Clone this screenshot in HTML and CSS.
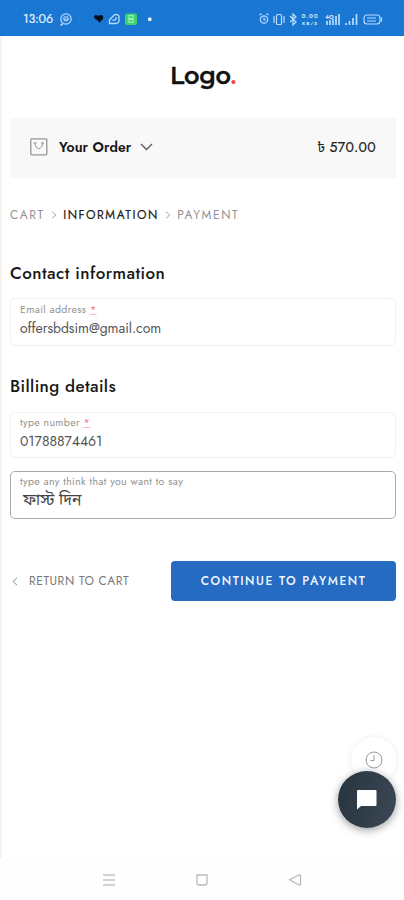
FILE: index.html
```html
<!DOCTYPE html>
<html lang="en">
<head>
<meta charset="utf-8">
<meta name="viewport" content="width=device-width, initial-scale=1">
<title>Checkout</title>
<link rel="stylesheet" href="styles.css">
</head>
<body>
<div class="screen">
  <header class="status">
    <span class="time">13:06</span>
    <svg class="status-left" width="96" height="16" viewBox="0 0 96 16" fill="none">
      <g stroke="#b9dcff" stroke-width="1.2"><circle cx="7" cy="8" r="5.2"/><path d="M2.5 12.5 2 14l2-.7M4.5 6.500q2.500-1.500 5 0M4.500 8q2.500 4 5 0z"/></g>
      <path d="M20 4v8q5 0 6-4" stroke="#1686e4"/>
      <path d="M35 5q2-2 4 0 3-2 5 0 1 3-2 5l-2 2q0-2-2-3-3-1-3-4z" fill="#07111d"/>
      <path d="M50.500 12.500V9l4.500-5q4-1.500 5 1.500v5q-1 2-3 2zM53.500 9q4 1 3.500-3" stroke="#b9dcff" stroke-width="1.300"/>
      <rect x="66" y="2.500" width="12" height="11.500" rx="2" fill="#3bd36f"/>
      <path d="M70 4.500h4v3h-4zM70 8.500h4v3h-4z" stroke="#9bf0b5" stroke-width="1.200"/>
      <rect x="89" y="6.500" width="3.500" height="3.500" rx="1" fill="#e7f5ff"/>
    </svg>
    <svg class="status-right" width="126" height="16" viewBox="0 0 126 16" fill="none" stroke="#b9dcff" stroke-width="1.200">
      <circle cx="6" cy="8.500" r="3.700"/><path d="M6 6.500v2.500h2M1.500 4l2-1.500M10.500 4l-2-1.500"/>
      <rect x="18.500" y="3.500" width="5" height="10" rx="1"/><path d="M16 5v7M26 5v7"/>
      <path d="m32 5 6 6-3 3V3l3 3-6 5"/>
      <g fill="#d6ebff" stroke="none" class="tiny"><text x="43.500" y="7" textLength="16">0.00</text><text class="unit" x="44" y="14" textLength="15">KB/S</text><text x="67" y="8">4G</text></g>
      <path d="M69 14v-4M72 14V9M75 14V8M78 14V5M81 14V3M88 14v-2M91.500 14v-4M95 14V7M98.500 14V3" stroke-width="1.700"/>
      <rect x="106" y="4" width="16" height="9" rx="3"/><path d="M123.500 6.500v4M109 7h9M109 10h9"/>
    </svg>
  </header>

  <main>
    <div class="logo">Logo<span>.</span></div>

    <section class="order">
      <svg width="18" height="18" viewBox="0 0 18 18" fill="none" stroke="#969696" stroke-width="1.300"><rect x=".8" y=".8" width="16" height="16" rx=".8"/><path d="M5 4.500q.2 6 3.800 6t3.900-6M3.500 5h3M11 5h3" stroke-width="1"/></svg>
      <strong>Your Order</strong>
      <svg class="chev" width="13" height="8" viewBox="0 0 13 8" fill="none" stroke="#555" stroke-width="1.300"><path d="m1 1 5.500 5.500L12 1"/></svg>
      <span class="price">৳ <b>570.00</b></span>
    </section>

    <nav class="crumbs">
      <span class="c1">CART</span>
      <svg width="6" height="8" viewBox="0 0 6 8" fill="none" stroke="#aaa"><path d="m1 .8 4 3.200-4 3.200"/></svg>
      <span class="c2">INFORMATION</span>
      <svg width="6" height="8" viewBox="0 0 6 8" fill="none" stroke="#aaa"><path d="m1 .8 4 3.200-4 3.200"/></svg>
      <span class="c3">PAYMENT</span>
    </nav>

    <h2 class="h-contact">Contact information</h2>
    <div class="field email">
      <label>Email address <em>*</em></label>
      <div class="value">offersbdsim@gmail.com</div>
    </div>

    <h2 class="h-billing">Billing details</h2>
    <div class="field number">
      <label>type number <em>*</em></label>
      <div class="value">01788874461</div>
    </div>
    <div class="field note">
      <label>type any think that you want to say</label>
      <div class="value bn" lang="bn">ফাস্ট দিন</div>
    </div>

    <div class="actions">
      <a class="back"><svg width="6" height="9" viewBox="0 0 6 9" fill="none" stroke="#888"><path d="M5 .8 1 4.500l4 3.700"/></svg><span>RETURN TO CART</span></a>
      <button><span>CONTINUE TO PAYMENT</span></button>
    </div>
  </main>

  <div class="recent">
    <svg width="18" height="18" viewBox="0 0 18 18" fill="none" stroke="#999"><circle cx="9" cy="9" r="8"/><path d="M9 4v5.500H5.500"/></svg>
  </div>
  <div class="chat">
    <svg width="22" height="22" viewBox="0 0 22 22"><path d="M2 1h17.500q1 0 1 1v14q0 1-1 1H5l-4 3.500V2q0-1 1-1z" fill="#fff"/></svg>
  </div>

  <footer class="system">
    <svg width="14" height="14" viewBox="0 0 14 14" fill="none" stroke="#c4c4c4" stroke-width="1.300"><path d="M1 2h12M1 7h12M1 12h12"/></svg>
    <svg width="14" height="14" viewBox="0 0 14 14" fill="none" stroke="#bbb" stroke-width="1.300"><path d="M2 2h10v8q0 2-2 2H4q-2 0-2-2z"/></svg>
    <svg width="14" height="14" viewBox="0 0 14 14" fill="none" stroke="#bbb" stroke-width="1.300"><path d="M1.500 6.800 11 2q1.500-.3 1.500 1v8q0 1.500-1.500 1z"/></svg>
  </footer>
</div>
</body>
</html>
```
FILE: styles.css
```css
* { box-sizing: border-box; }
body { margin: 0; background: #fff; font-family: Jost, Lato, "Noto Sans Bengali", sans-serif; color: #222; }
.screen { position: relative; height: 900px; overflow: hidden; display: flex; flex-direction: column; }
.status { height: 36px; flex: none; background: #1976d2; display: flex; align-items: center; padding: 1px 20px 0 23px; color: #e2f1ff; }
.time { width: 36px; font-size: 12.500px; letter-spacing: -.2px; white-space: nowrap; -webkit-text-stroke: .2px #e2f1ff; }
.status-right { margin-left: auto; }
.tiny { font-size: 6px; font-weight: 600; }
.tiny .unit { font-size: 5px; }
main { flex: 1; padding: 0 8px 0 8px; border-left: 2px solid #f3f3f3; white-space: nowrap; }
.logo { height: 82px; padding-top: 25px; text-align: center; font-family: Montserrat, Jost, sans-serif; font-size: 24px; line-height: 30px; font-weight: 600; color: #111; letter-spacing: -.3px; -webkit-text-stroke: .3px #111; }
.logo span { color: #f5484c; -webkit-text-stroke: 0; }
.order { height: 60px; background: #f8f8f8; display: flex; align-items: center; padding: 0 20px 2px; }
.order strong { margin-left: 11px; font-size: 14px; font-weight: 600; color: #151515; letter-spacing: .1px; }
.chev { margin-left: 9px; }
.price { margin-left: auto; font-size: 14px; }
.price b { font-weight: 400; letter-spacing: .3px; -webkit-text-stroke: .2px #222; }
.crumbs { height: 74px; display: flex; align-items: center; font-size: 12px; color: #929292; }
.crumbs svg { margin: 0 6px 0 6.500px; }
.c1, .c3 { letter-spacing: 1.600px; }
.c2 { color: #222; letter-spacing: 1.550px; -webkit-text-stroke: .2px #222; }
h2 { margin: 0; font-size: 17px; line-height: 26px; font-weight: 500; color: #171717; }
.h-contact { height: 46px; padding-top: 8px; letter-spacing: .45px; }
.h-billing { height: 66px; padding-top: 27px; letter-spacing: .38px; }
.field { border: 1px solid #f1f1f1; border-radius: 5px; padding: 4px 9px 0; }
.email { height: 48px; }
.number { height: 46px; margin-bottom: 13px; padding-top: 3px; }
.note { height: 48px; border-color: #aaa; padding-top: 3px; }
label { display: block; font-size: 10.500px; line-height: 13px; letter-spacing: .37px; color: #919191; }
label em { color: #ef6b77; font-style: normal; text-decoration: underline; text-decoration-color: #f5b8bd; }
.value { font-size: 14px; line-height: 24px; letter-spacing: -.05px; color: #555; }
.bn { padding-left: 3px; font-size: 15.700px; line-height: 23px; letter-spacing: 0; color: #444; }
.actions { margin-top: 42px; display: flex; align-items: center; justify-content: space-between; }
.back { display: flex; align-items: center; gap: 11px; padding-left: 2px; font-size: 12px; letter-spacing: .55px; color: #777; }
button { width: 225px; height: 40px; border: 0; border-radius: 4px; background: #256bc1; color: #f1f7ff; font: 500 12px Jost, Lato, sans-serif; letter-spacing: 1.550px; padding: 0; white-space: nowrap; }
.recent { position: absolute; left: 351px; top: 737px; width: 46px; height: 46px; border-radius: 50%; background: #fff; box-shadow: 0 0 5px #e9e9e9; display: grid; place-items: center; }
.chat { position: absolute; left: 338px; top: 771px; width: 58px; height: 57px; border-radius: 50%; background: linear-gradient(100deg, #273540, #3b4754); box-shadow: 0 2px 9px #999; display: grid; place-items: center; }
.system { height: 42px; flex: none; display: flex; align-items: center; justify-content: space-between; padding: 2px 102px 0; background: #fefefe; }
```
